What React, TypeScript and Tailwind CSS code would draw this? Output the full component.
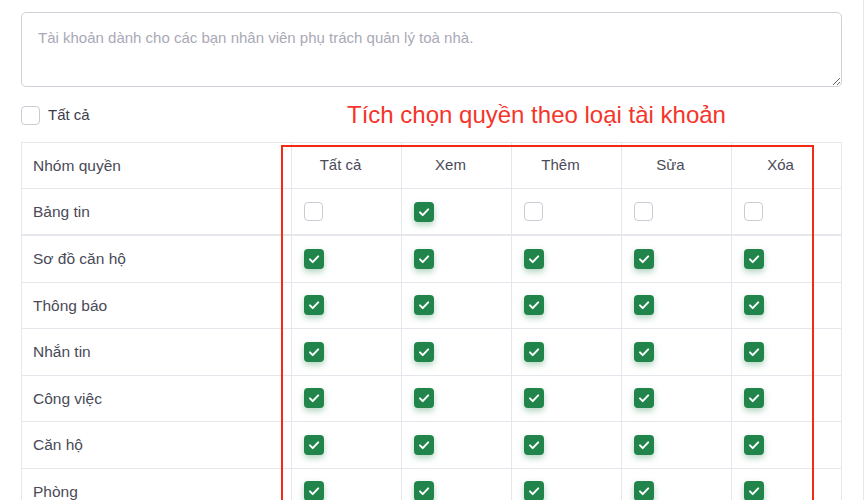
const columns = ['Tất cả', 'Xem', 'Thêm', 'Sửa', 'Xóa'];

const rows: { name: string; perms: boolean[] }[] = [
  { name: 'Bảng tin', perms: [false, true, false, false, false] },
  { name: 'Sơ đồ căn hộ', perms: [true, true, true, true, true] },
  { name: 'Thông báo', perms: [true, true, true, true, true] },
  { name: 'Nhắn tin', perms: [true, true, true, true, true] },
  { name: 'Công việc', perms: [true, true, true, true, true] },
  { name: 'Căn hộ', perms: [true, true, true, true, true] },
  { name: 'Phòng', perms: [true, true, true, true, true] },
];

function Check({ checked }: { checked: boolean }) {
  if (!checked) {
    return <span className="block h-[19px] w-[19px] rounded-[4px] border border-[#cbcbd4] bg-white" />;
  }
  return (
    <span className="flex h-[20px] w-[20px] items-center justify-center rounded-[4px] bg-[#21844b] shadow-[0_3px_6px_rgba(33,132,75,0.35)]">
      <svg viewBox="0 0 20 20" className="h-[20px] w-[20px]" fill="none">
        <path d="M6 10.4l2.7 2.7L14.2 7.4" stroke="white" strokeWidth="2" strokeLinecap="round" strokeLinejoin="round" />
      </svg>
    </span>
  );
}

export default function App() {
  return (
    <div className="h-[500px] w-[864px] overflow-hidden border-r border-[#e6e6ec] bg-white px-[21px] pt-[12px] font-['Liberation_Sans',Arial,sans-serif]">
      {/* Description */}
      <textarea
        placeholder="Tài khoản dành cho các bạn nhân viên phụ trách quản lý toà nhà."
        className="block h-[75px] w-full rounded-[5px] border border-[#d0d0d8] px-4 pt-3 text-[15px] leading-[26px] text-[#333] outline-none placeholder:text-[#a9a9b6]"
      />

      {/* Select all */}
      <div className="mt-[13px] flex h-[30px] items-center">
        <label className="flex w-[326px] items-center gap-2">
          <Check checked={false} />
          <span className="text-[15px] text-[#3c3c4a]">Tất cả</span>
        </label>
        <span className="text-[24px] leading-[30px] text-[#f5342a]">Tích chọn quyền theo loại tài khoản</span>
      </div>

      {/* Permission table */}
      <div className="relative mt-[12px] border-l border-t border-[#e6e6ed]">
        <div className="flex h-[46px] border-b border-[#e6e6ed]">
          <div className="flex w-[270px] items-center border-r border-[#e6e6ed] pl-[11px] text-[15.5px] text-[#4a4a58]">
            Nhóm quyền
          </div>
          {columns.map((c) => (
            <div key={c} className="flex w-[110px] items-center justify-center border-r border-[#e6e6ed] pr-3 text-[15px] text-[#4a4a58]">
              {c}
            </div>
          ))}
        </div>

        {rows.map((r, i) => (
          <div key={r.name} className={`flex ${i === 0 ? 'h-[47px] border-b-2' : 'h-[46.5px] border-b'} border-[#e6e6ed]`}>
            <div className="flex w-[270px] items-center border-r border-[#e6e6ed] pl-[11px] text-[15.5px] text-[#4a4a58]">
              {r.name}
            </div>
            {r.perms.map((p, j) => (
              <div key={j} className="flex w-[110px] items-center border-r border-[#e6e6ed] pl-3">
                <Check checked={p} />
              </div>
            ))}
          </div>
        ))}

        {/* annotation box */}
        <div className="pointer-events-none absolute left-[259px] top-[2px] h-[500px] w-[533px] border-2 border-[#f52a14]" />
      </div>
    </div>
  );
}
